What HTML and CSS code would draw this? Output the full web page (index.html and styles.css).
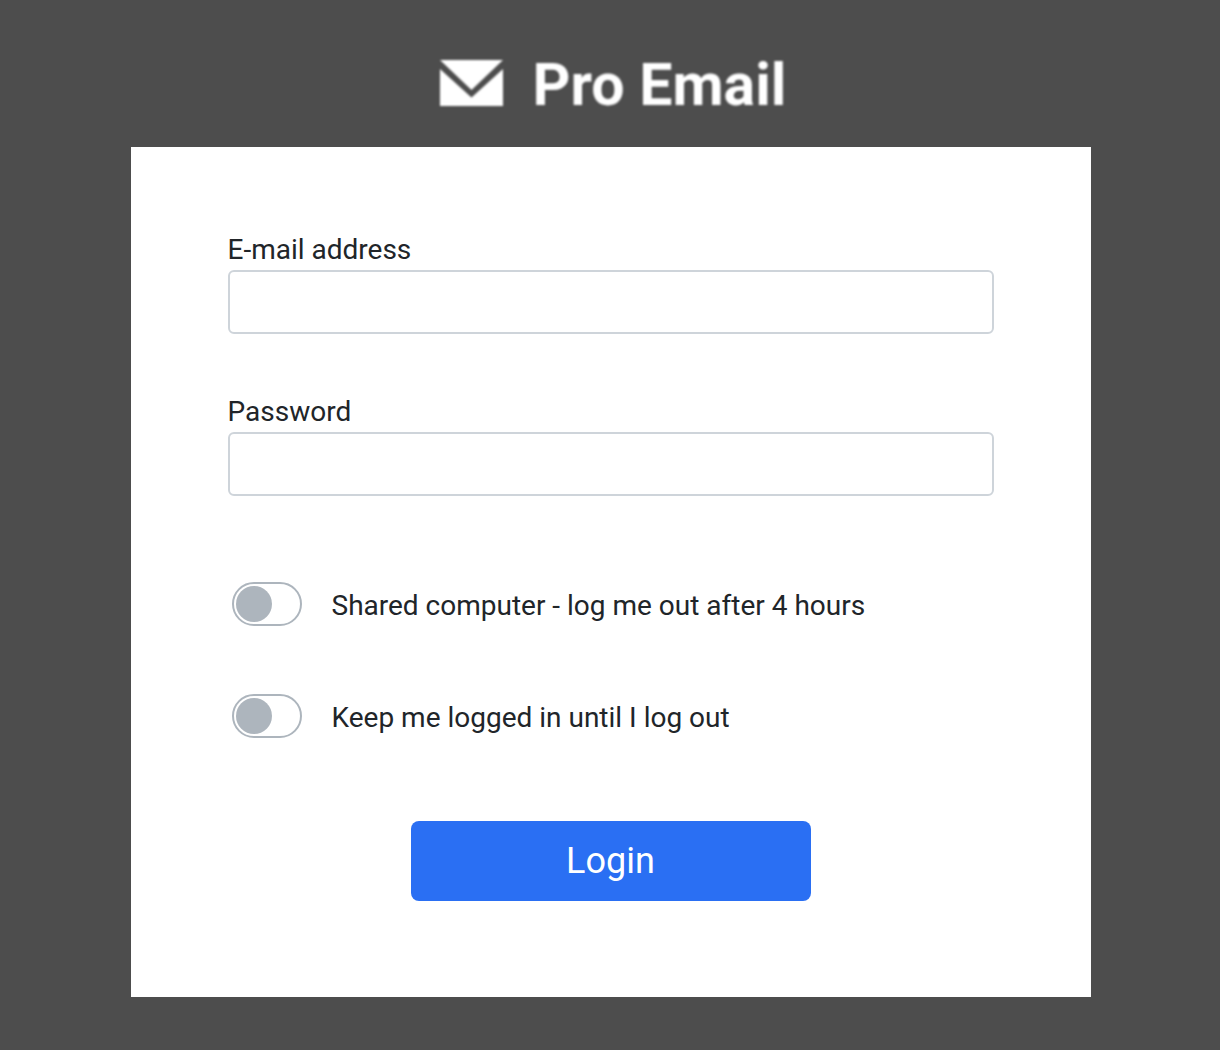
FILE: index.html
```html
<!DOCTYPE html>
<html>
<head>
  <meta charset="UTF-8">
  <title>Pro Email - Login</title>
  <link rel="stylesheet" href="styles.css">
</head>
<body>
  <div class="logo">
    <svg class="logo-icon" width="64" height="48" viewBox="-1 0 64 48">
      <path d="M0 0H63L31.500 30Z" fill="#fff"/>
      <path d="M0 9L31.500 37.500L63 9V46H0Z" fill="#fff"/>
    </svg>
    <span class="logo-text">Pro Email</span>
  </div>
  <form class="card">
    <div class="field">
      <label for="email">E-mail address</label>
      <input type="text" id="email">
    </div>
    <div class="field">
      <label for="password">Password</label>
      <input type="password" id="password">
    </div>
    <div class="toggles">
      <div class="toggle-row">
        <span class="toggle"><span class="knob"></span></span>
        <span class="toggle-label">Shared computer - log me out after 4 hours</span>
      </div>
      <div class="toggle-row">
        <span class="toggle"><span class="knob"></span></span>
        <span class="toggle-label">Keep me logged in until I log out</span>
      </div>
    </div>
    <button type="button" class="btn">Login</button>
  </form>
</body>
</html>
```

FILE: styles.css
```css
html, body {
  margin: 0;
  padding: 0;
  background: #4d4d4d;
  font-family: Roboto, sans-serif;
  color: #212529;
}
body {
  height: 1050px;
  box-sizing: border-box;
  padding-left: 1px; /* card centre lands on a half pixel */
  overflow: hidden;
  display: flex;
  flex-direction: column;
  align-items: center;
}
.logo {
  height: 147px;
  box-sizing: border-box;
  padding-top: 50px;
  margin-left: 4px;
  display: flex;
  align-items: flex-start;
  color: #fff;
  filter: blur(0.8px);
}
.logo-icon {
  margin-top: 10px;
  margin-right: 30px;
}
.logo-text {
  font-size: 59px;
  font-weight: 700;
  line-height: 68px;
  margin-top: 1px;
}
.card {
  width: 960px;
  height: 850px;
  box-sizing: border-box;
  background: #fff;
  padding: 85px 97px 0;
}
.field {
  margin-bottom: 60px;
}
.field label {
  display: block;
  font-size: 28px;
  line-height: 36px;
  margin-bottom: 2px;
}
.field input {
  display: block;
  width: 766px;
  height: 64px;
  box-sizing: border-box;
  border: 2px solid #ced4da;
  border-radius: 6px;
  background: #fff;
}
.toggles {
  padding: 26px 0 0 4px;
}
.toggle-row {
  display: flex;
  align-items: center;
  height: 44px;
  margin-bottom: 68px;
}
.toggle {
  width: 70px;
  height: 44px;
  box-sizing: border-box;
  border: 2px solid #adb5bd;
  border-radius: 22px;
  padding: 2px;
  margin-right: 30px;
}
.knob {
  display: block;
  width: 36px;
  height: 36px;
  border-radius: 50%;
  background: #adb5bd;
}
.toggle-label {
  font-size: 28px;
  margin-top: 2px;
}
.btn {
  display: block;
  width: 400px;
  height: 80px;
  margin: 83px auto 0;
  border: none;
  border-radius: 8px;
  background: #2a6ff3;
  color: #fff;
  font-family: Roboto, sans-serif;
  font-size: 36px;
}
```
